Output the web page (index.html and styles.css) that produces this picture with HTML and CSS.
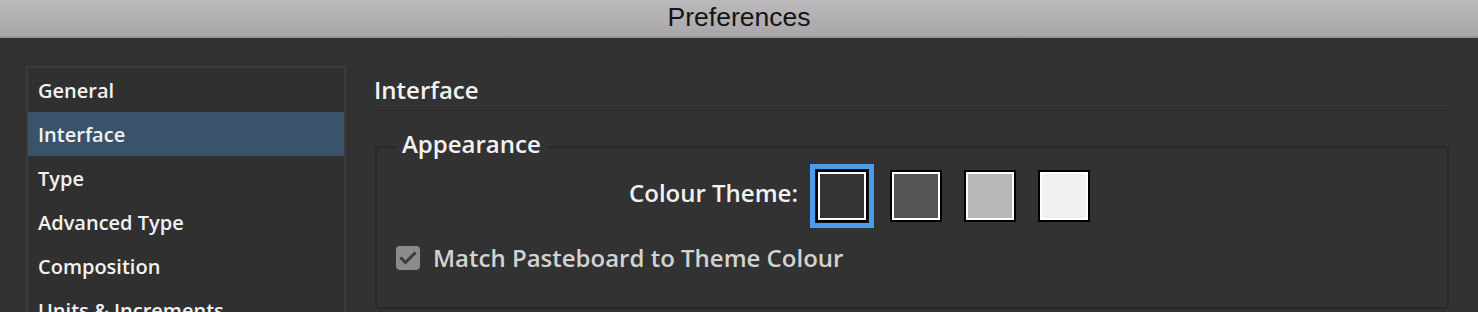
FILE: index.html
```html
<!DOCTYPE html>
<html lang="en">

<head>
  <meta charset="UTF-8">
  <meta name="viewport" content="width=device-width, initial-scale=1.0">
  <title>Preferences</title>
  <link rel="stylesheet" href="styles.css">
</head>

<body>
  <div class="titlebar">Preferences</div>

  <div class="main">
    <ul class="sidebar">
      <li class="item">General</li>
      <li class="item active">Interface</li>
      <li class="item">Type</li>
      <li class="item">Advanced Type</li>
      <li class="item">Composition</li>
      <li class="item">Units &amp; Increments</li>
    </ul>

    <div class="content">
      <h2 class="section-title">Interface</h2>

      <fieldset class="group">
        <legend>Appearance</legend>

        <div class="theme-row">
          <span class="theme-label">Colour Theme:</span>
          <div class="swatches">
            <div class="swatch dark selected"></div>
            <div class="swatch medium"></div>
            <div class="swatch light"></div>
            <div class="swatch lightest"></div>
          </div>
        </div>

        <label class="check-row">
          <span class="checkbox">
            <svg width="24" height="24" viewBox="0 0 24 24">
              <path d="M5.5 12.5 L9.5 16.5 L18.5 7.5" fill="none" stroke="#3b3b3b" stroke-width="3" stroke-linecap="square"/>
            </svg>
          </span>
          Match Pasteboard to Theme Colour
        </label>
      </fieldset>
    </div>
  </div>
</body>

</html>
```

FILE: styles.css
```css
html, body {
  margin: 0;
  height: 312px;
  overflow: hidden;
}
body {
  background-color: #323232;
  font-family: "Open Sans", "Noto Sans", sans-serif;
  color: #f2f2f2;
}
.titlebar {
  height: 36px;
  line-height: 34px;
  text-align: center;
  font-family: "Liberation Sans", Arial, sans-serif;
  font-size: 26.5px;
  color: #141414;
  background: linear-gradient(#bcbabd, #a8a6a8);
  border-bottom: 2px solid #969696;
}
.main {
  display: flex;
  padding: 28px 0 0 26px;
}
.sidebar {
  list-style: none;
  margin: 0;
  padding: 0;
  width: 320px;
  height: 300px;
  box-sizing: border-box;
  flex-shrink: 0;
  border: 2px solid #3b3b3b;
  background-color: #303030;
}
.item {
  height: 44px;
  line-height: 46px;
  padding-left: 10px;
  font-size: 20px;
  font-weight: 600;
  white-space: nowrap;
  overflow: hidden;
}
.item.active {
  background-color: #3a536b;
}
.content {
  margin-left: 28px;
  width: 1075px;
}
.section-title {
  margin: 0;
  padding: 9px 0 5px;
  font-size: 24px;
  line-height: 30px;
  font-weight: 600;
  border-bottom: 1px solid #272727;
}
.group {
  margin: 20px 0 0 1px;
  padding: 2px 0 37px 19px;
  border: 2px solid #282828;
  border-radius: 5px;
  min-width: 0;
}
.group legend {
  padding: 0 6px 5px;
  font-size: 24px;
  line-height: 26px;
  font-weight: 600;
}
.theme-row {
  display: flex;
  align-items: center;
  height: 64px;
}
.theme-label {
  width: 402px;
  margin-right: 18px;
  padding-bottom: 6px;
  text-align: right;
  font-size: 24px;
  line-height: 24px;
  font-weight: 600;
}
.swatches {
  display: flex;
  gap: 22px;
}
.swatch {
  width: 52px;
  height: 52px;
  box-sizing: border-box;
  border: 2px solid #000;
  box-shadow: inset 0 0 0 2px #fff;
}
.swatch.dark {
  background-color: #333;
}
.swatch.medium {
  background-color: #555;
}
.swatch.light {
  background-color: #b8b8b8;
}
.swatch.lightest {
  background-color: #f0f0f0;
}
.swatch.selected {
  box-shadow: inset 0 0 0 2px #fff, 0 0 0 1px #151515, 0 0 0 6px #4a9de8;
}
.check-row {
  display: flex;
  align-items: center;
  gap: 13px;
  margin-top: 18px;
  font-size: 24px;
  line-height: 24px;
  font-weight: 600;
  color: #d2d2d2;
}
.checkbox {
  width: 24px;
  height: 24px;
  border-radius: 4px;
  background-color: #8b8b8b;
}
.checkbox svg {
  display: block;
}
```
